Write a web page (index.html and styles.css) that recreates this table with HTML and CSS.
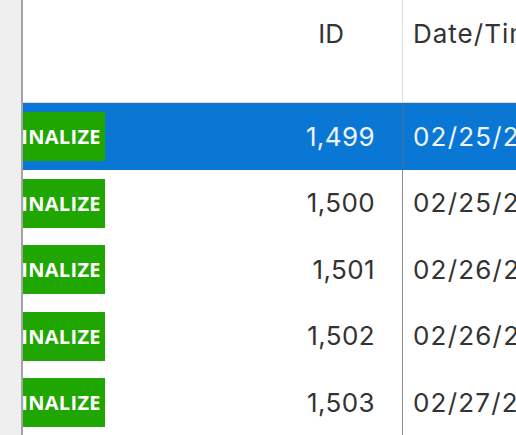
FILE: index.html
```html
<!DOCTYPE html>
<html>
<head>
<meta charset="utf-8">
<link rel="stylesheet" href="styles.css">
</head>
<body>
<div class="frame">
  <div class="side"></div>
  <div class="viewport">
    <div class="grid">
      <div class="hcell h-status"></div>
      <div class="hcell h-id">ID</div>
      <div class="hcell h-date">Date/Time</div>

      <div class="cell c-status sel"><span class="badge">FINALIZE</span></div>
      <div class="cell c-id sel">1,499</div>
      <div class="cell c-date sel">02/25/2024</div>

      <div class="cell c-status"><span class="badge">FINALIZE</span></div>
      <div class="cell c-id">1,500</div>
      <div class="cell c-date">02/25/2024</div>

      <div class="cell c-status"><span class="badge">FINALIZE</span></div>
      <div class="cell c-id">1,501</div>
      <div class="cell c-date">02/26/2024</div>

      <div class="cell c-status"><span class="badge">FINALIZE</span></div>
      <div class="cell c-id">1,502</div>
      <div class="cell c-date">02/26/2024</div>

      <div class="cell c-status"><span class="badge">FINALIZE</span></div>
      <div class="cell c-id">1,503</div>
      <div class="cell c-date">02/27/2024</div>
    </div>
  </div>
</div>
</body>
</html>
```

FILE: styles.css
```css
html, body {
  margin: 0;
  padding: 0;
  background: #fff;
  height: 100%;
  overflow: hidden;
}
.frame {
  display: flex;
  height: 435px;
  width: 516px;
}
.side {
  width: 21px;
  flex: none;
  background: #efefef;
  border-right: 2px solid #a4a4a4;
}
.viewport {
  flex: 1;
  overflow: hidden;
  position: relative;
}
.grid {
  display: grid;
  grid-template-columns: 120px 276px 340px;
  grid-template-rows: 103px repeat(5, 66.5px);
  margin-left: -16px;
  width: 736px;
  font-family: "Inter", "Liberation Sans", sans-serif;
  font-size: 26px;
  color: #333;
}
.hcell {
  border-bottom: 1px solid #dcdcdc;
  padding-top: 19px;
  line-height: 30px;
}
.h-id {
  text-align: right;
  padding-right: 58px;
  border-right: 1px solid #dcdcdc;
}
.h-date {
  padding-left: 10px;
  white-space: nowrap;
  letter-spacing: 1px;
}
.cell {
  display: flex;
  align-items: center;
}
.c-status {
  align-items: flex-start;
  padding-top: 9px;
}
.c-id {
  justify-content: flex-end;
  padding-right: 27px;
  border-right: 1px solid #8c8c8c;
  letter-spacing: 0.4px;
}
.c-date {
  padding-left: 10px;
  white-space: nowrap;
  letter-spacing: 1.2px;
}
.sel {
  background: #0a77d5;
  color: #eef4fb;
}
.c-id.sel {
  border-right-color: #4a6f97;
}
.badge {
  display: inline-flex;
  align-items: center;
  height: 49px;
  padding: 0 4px 0 3px;
  background: #1fa600;
  color: #fff;
  font-family: "Open Sans", "Liberation Sans", sans-serif;
  font-weight: 700;
  font-size: 20px;
  letter-spacing: 0.3px;
}
```
